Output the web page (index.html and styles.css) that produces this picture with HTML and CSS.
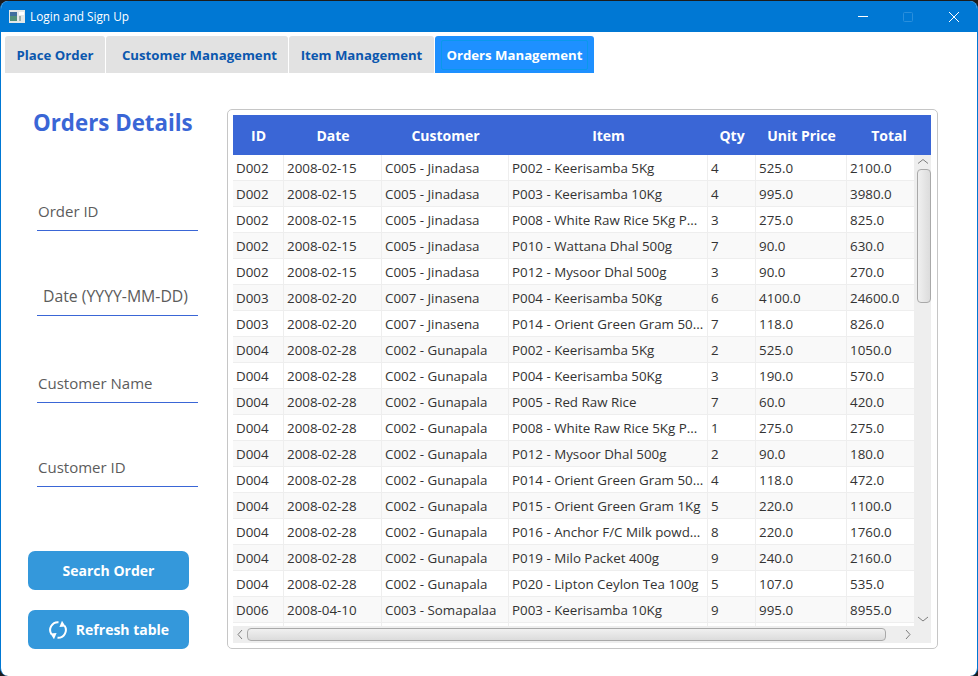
FILE: index.html
```html
<!DOCTYPE html>
<html lang="en">
<head>
    <meta charset="UTF-8">
    <meta name="viewport" content="width=device-width, initial-scale=1.0">
    <title>Login and Sign Up</title>
    <link rel="stylesheet" href="styles.css">
</head>
<body>
<div class="window">
    <div class="titlebar">
        <svg class="app-icon" width="16" height="13" viewBox="0 0 16 13">
            <rect x="0" y="0" width="16" height="13" fill="#e4e8e8"/>
            <rect x="1" y="2" width="7" height="4" fill="#3f6f9e"/>
            <rect x="1" y="6" width="7" height="5" fill="#4f8f78"/>
            <rect x="10" y="2" width="5" height="3" fill="#ffffff"/>
            <rect x="10" y="6" width="2" height="5" fill="#9fb0ac"/>
        </svg>
        <span class="window-title">Login and Sign Up</span>
        <div class="window-buttons">
            <svg width="12" height="12" viewBox="0 0 12 12"><path d="M0 5.5h10" stroke="#fff" fill="none"/></svg>
            <svg width="12" height="12" viewBox="0 0 12 12"><rect x="0.5" y="1.5" width="9" height="9" rx="1" stroke="#2a8fdc" fill="none"/></svg>
            <svg width="12" height="12" viewBox="0 0 12 12"><path d="M1 1l10 10M11 1L1 11" stroke="#fff" fill="none"/></svg>
        </div>
    </div>

    <div class="tabs">
        <div class="tab tab-place">Place Order</div>
        <div class="tab tab-customer">Customer Management</div>
        <div class="tab tab-item">Item Management</div>
        <div class="tab tab-orders active"><span>Orders Management</span></div>
    </div>

    <div class="content">
        <div class="side">
            <h2>Orders Details</h2>
            <div class="fields">
                <input class="field" type="text" placeholder="Order ID">
                <input class="field field-date" type="text" placeholder="Date (YYYY-MM-DD)">
                <input class="field field-name" type="text" placeholder="Customer Name">
                <input class="field field-id" type="text" placeholder="Customer ID">
            </div>
            <div class="actions">
                <button type="button">Search Order</button>
                <button type="button">
                    <svg width="20" height="20" viewBox="0 0 20 20" fill="none" stroke="#fff" stroke-width="2">
                        <path d="M3.4 14.2A7.8 7.8 0 0 1 10.5 2.2"/>
                        <path d="M16.6 5.8A7.8 7.8 0 0 1 9.5 17.8"/>
                        <path d="M14 0.8l3.6 5.6-6.2 0.6z" fill="#fff" stroke="none"/>
                        <path d="M6 19.2l-3.6-5.6 6.2-0.6z" fill="#fff" stroke="none"/>
                    </svg>
                    Refresh table
                </button>
            </div>
        </div>

        <div class="table-panel">
            <div class="table-head">
                <div>ID</div><div>Date</div><div>Customer</div><div>Item</div><div>Qty</div><div>Unit Price</div><div>Total</div>
            </div>
            <div class="table-middle">
                <div class="rows">
                    <table>
                        <colgroup>
                            <col class="c-id"><col class="c-date"><col class="c-customer"><col class="c-item"><col class="c-qty"><col class="c-price"><col class="c-total">
                        </colgroup>
                        <tbody>
                            <tr><td>D002</td><td>2008-02-15</td><td>C005 - Jinadasa</td><td>P002 - Keerisamba 5Kg</td><td>4</td><td>525.0</td><td>2100.0</td></tr>
                            <tr><td>D002</td><td>2008-02-15</td><td>C005 - Jinadasa</td><td>P003 - Keerisamba 10Kg</td><td>4</td><td>995.0</td><td>3980.0</td></tr>
                            <tr><td>D002</td><td>2008-02-15</td><td>C005 - Jinadasa</td><td>P008 - White Raw Rice 5Kg P...</td><td>3</td><td>275.0</td><td>825.0</td></tr>
                            <tr><td>D002</td><td>2008-02-15</td><td>C005 - Jinadasa</td><td>P010 - Wattana Dhal 500g</td><td>7</td><td>90.0</td><td>630.0</td></tr>
                            <tr><td>D002</td><td>2008-02-15</td><td>C005 - Jinadasa</td><td>P012 - Mysoor Dhal 500g</td><td>3</td><td>90.0</td><td>270.0</td></tr>
                            <tr><td>D003</td><td>2008-02-20</td><td>C007 - Jinasena</td><td>P004 - Keerisamba 50Kg</td><td>6</td><td>4100.0</td><td>24600.0</td></tr>
                            <tr><td>D003</td><td>2008-02-20</td><td>C007 - Jinasena</td><td>P014 - Orient Green Gram 50...</td><td>7</td><td>118.0</td><td>826.0</td></tr>
                            <tr><td>D004</td><td>2008-02-28</td><td>C002 - Gunapala</td><td>P002 - Keerisamba 5Kg</td><td>2</td><td>525.0</td><td>1050.0</td></tr>
                            <tr><td>D004</td><td>2008-02-28</td><td>C002 - Gunapala</td><td>P004 - Keerisamba 50Kg</td><td>3</td><td>190.0</td><td>570.0</td></tr>
                            <tr><td>D004</td><td>2008-02-28</td><td>C002 - Gunapala</td><td>P005 - Red Raw Rice</td><td>7</td><td>60.0</td><td>420.0</td></tr>
                            <tr><td>D004</td><td>2008-02-28</td><td>C002 - Gunapala</td><td>P008 - White Raw Rice 5Kg P...</td><td>1</td><td>275.0</td><td>275.0</td></tr>
                            <tr><td>D004</td><td>2008-02-28</td><td>C002 - Gunapala</td><td>P012 - Mysoor Dhal 500g</td><td>2</td><td>90.0</td><td>180.0</td></tr>
                            <tr><td>D004</td><td>2008-02-28</td><td>C002 - Gunapala</td><td>P014 - Orient Green Gram 50...</td><td>4</td><td>118.0</td><td>472.0</td></tr>
                            <tr><td>D004</td><td>2008-02-28</td><td>C002 - Gunapala</td><td>P015 - Orient Green Gram 1Kg</td><td>5</td><td>220.0</td><td>1100.0</td></tr>
                            <tr><td>D004</td><td>2008-02-28</td><td>C002 - Gunapala</td><td>P016 - Anchor F/C Milk powd...</td><td>8</td><td>220.0</td><td>1760.0</td></tr>
                            <tr><td>D004</td><td>2008-02-28</td><td>C002 - Gunapala</td><td>P019 - Milo Packet 400g</td><td>9</td><td>240.0</td><td>2160.0</td></tr>
                            <tr><td>D004</td><td>2008-02-28</td><td>C002 - Gunapala</td><td>P020 - Lipton Ceylon Tea 100g</td><td>5</td><td>107.0</td><td>535.0</td></tr>
                            <tr><td>D006</td><td>2008-04-10</td><td>C003 - Somapalaa</td><td>P003 - Keerisamba 10Kg</td><td>9</td><td>995.0</td><td>8955.0</td></tr>
                            <tr><td></td><td></td><td></td><td></td><td></td><td></td><td></td></tr>
                        </tbody>
                    </table>
                </div>
                <div class="vscroll">
                    <svg width="16" height="14" viewBox="0 0 16 14"><path d="M3 8.5l5-4 5 4" stroke="#7e7e7e" fill="none"/></svg>
                    <div class="vtrack"><div class="vthumb"></div></div>
                    <svg width="16" height="14" viewBox="0 0 16 14"><path d="M3 5l5 4 5-4" stroke="#7e7e7e" fill="none"/></svg>
                </div>
            </div>
            <div class="hscroll">
                <svg width="14" height="17" viewBox="0 0 14 17"><path d="M9 4L5 8.5l4 4.5" stroke="#7e7e7e" fill="none"/></svg>
                <div class="htrack"><div class="hthumb"></div></div>
                <svg width="14" height="17" viewBox="0 0 14 17"><path d="M5 4l4 4.5L5 13" stroke="#7e7e7e" fill="none"/></svg>
                <div class="corner"></div>
            </div>
        </div>
    </div>
</div>
</body>
</html>
```

FILE: styles.css
```css
* {
    box-sizing: border-box;
}
html, body {
    margin: 0;
    height: 100%;
    overflow: hidden;
}
body {
    background: #1c1c1c;
    padding-top: 1px;
    font-family: 'Open Sans', 'Noto Sans', sans-serif;
}
.window {
    height: 675px;
    display: flex;
    flex-direction: column;
    background: #fff;
    border: 1px solid #0078d4;
    border-top: none;
    border-bottom: none;
    border-radius: 8px;
    overflow: hidden;
}
.titlebar {
    height: 31px;
    flex: none;
    display: flex;
    align-items: center;
    background: #0078d4;
    color: #fff;
    padding-left: 8px;
}
.app-icon {
    margin-right: 5px;
}
.window-title {
    font-size: 11.8px;
    padding-bottom: 2px;
}
.window-buttons {
    margin-left: auto;
    display: flex;
    gap: 33px;
    padding-right: 17px;
    align-items: center;
}
.tabs {
    display: flex;
    gap: 1px;
    padding: 4px 0 0 4px;
    flex: none;
}
.tab {
    height: 37px;
    display: flex;
    align-items: center;
    justify-content: center;
    background: #e2e2e2;
    color: #0b57ae;
    font-size: 13.2px;
    font-weight: 700;
    border-radius: 3px 3px 0 0;
}
.tab-place { width: 100px; }
.tab-customer { width: 182px; padding-left: 5px; }
.tab-item { width: 145px; }
.tab-orders { width: 159px; }
.tab.active {
    background: #1e90ff;
    color: #fff;
}
.tab.active span {
    display: block;
    padding: 5px 0;
    width: 147px;
    text-align: center;
    border: 1px solid #0a98ec;
    border-radius: 2px;
}
.content {
    flex: 1;
    display: flex;
    padding: 36px 40px 0 26px;
    min-height: 0;
}
.side {
    width: 200px;
    flex: none;
    display: flex;
    flex-direction: column;
    height: 540px;
}
.side h2 {
    margin: 0 0 0 6px;
    font-size: 22.3px;
    line-height: 28px;
    color: #3a66d6;
    font-weight: 700;
    white-space: nowrap;
}
.fields {
    display: flex;
    flex-direction: column;
    margin: 58px 0 0 10px;
    gap: 49px;
}
.field {
    display: block;
    width: 161px;
    height: 36px;
    border: none;
    border-bottom: 1px solid #3a66d6;
    outline: none;
    padding: 0 0 4px 1px;
    background: transparent;
    font-family: inherit;
    font-size: 15px;
}
.field::placeholder {
    color: #5c5c5c;
    opacity: 1;
}
.field-date {
    padding-left: 6px;
    font-size: 15.8px;
}
.field-name {
    margin-top: 2px;
}
.field-id {
    margin-top: -1px;
}
.actions {
    margin-top: auto;
    display: flex;
    flex-direction: column;
    gap: 20px;
    padding-left: 1px;
}
.actions button {
    width: 161px;
    height: 39px;
    display: flex;
    align-items: center;
    justify-content: center;
    gap: 8px;
    border: none;
    border-radius: 7px;
    background: #3498db;
    color: #fff;
    font-family: inherit;
    font-size: 14px;
    font-weight: 700;
}
.table-panel {
    width: 711px;
    height: 540px;
    flex: none;
    display: flex;
    flex-direction: column;
    border: 1px solid #c6c6c6;
    border-radius: 5px;
    padding: 5px 6px 5px 5px;
    background: #fff;
}
.table-head {
    height: 40px;
    flex: none;
    display: grid;
    grid-template-columns: 51px 98px 127px 199px 48px 91px 84px;
    align-items: center;
    text-align: center;
    background: #3a66d6;
    color: #fff;
    font-size: 14px;
    font-weight: 700;
}
.table-middle {
    flex: 1;
    display: flex;
    min-height: 0;
}
.rows {
    width: 682px;
    overflow: hidden;
}
table {
    width: 682px;
    table-layout: fixed;
    border-collapse: separate;
    border-spacing: 0;
    color: #333;
    font-size: 13.35px;
}
.c-id { width: 51px; }
.c-date { width: 98px; }
.c-customer { width: 127px; }
.c-item { width: 199px; }
.c-qty { width: 48px; }
.c-price { width: 91px; }
.c-total { width: 68px; }
td {
    height: 26px;
    padding: 1px 0 0 3px;
    white-space: nowrap;
    overflow: hidden;
    border-right: 1px solid #eeeeee;
    border-bottom: 1px solid #eeeeee;
}
tr:nth-child(even) td {
    background: #f9f9f9;
}
.vscroll {
    width: 16px;
    background: #eeeeee;
    display: flex;
    flex-direction: column;
}
.vtrack {
    flex: 1;
    padding: 0 0 0 2px;
}
.vthumb {
    height: 134px;
    border: 1px solid #a9a9a9;
    border-radius: 4px;
    background: linear-gradient(to right, #f0f0f0, #dcdcdc);
}
.hscroll {
    height: 17px;
    flex: none;
    display: flex;
    background: #eeeeee;
}
.htrack {
    flex: 1;
    padding: 2px 0;
}
.hthumb {
    width: 639px;
    height: 100%;
    border: 1px solid #a9a9a9;
    border-radius: 4px;
    background: linear-gradient(to bottom, #f0f0f0, #dcdcdc);
}
.corner {
    width: 16px;
}
```
